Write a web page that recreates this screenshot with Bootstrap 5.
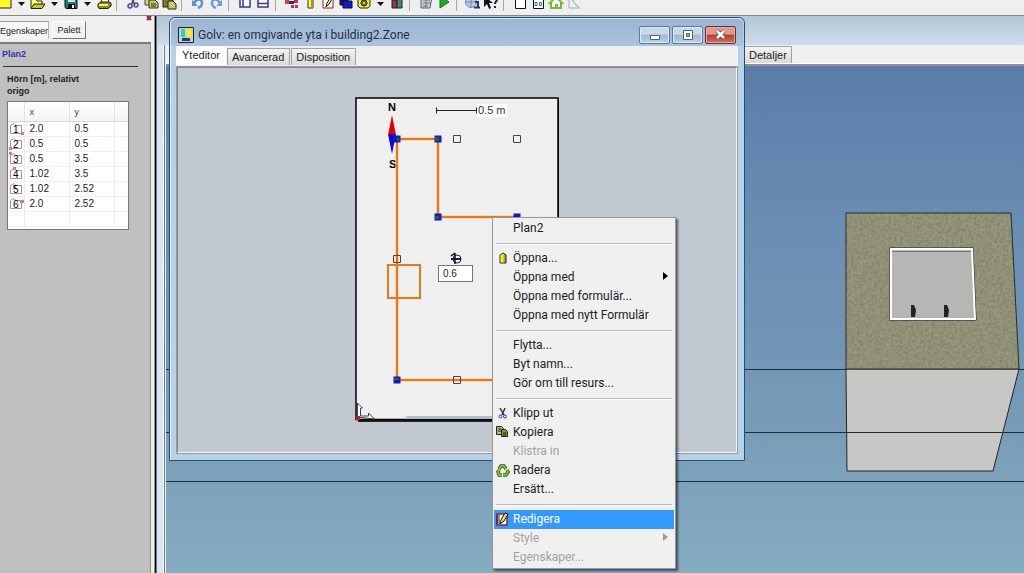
<!DOCTYPE html>
<html lang="sv">
<head>
<meta charset="utf-8">
<meta name="viewport" content="width=device-width, initial-scale=1">
<title>Golv: en omgivande yta i building2.Zone</title>
<link href="https://cdn.jsdelivr.net/npm/bootstrap@5.3.0/dist/css/bootstrap.min.css" rel="stylesheet">
<script src="https://cdn.jsdelivr.net/npm/bootstrap@5.3.0/dist/js/bootstrap.bundle.min.js"></script>
<style>
  body { font-family: "Liberation Sans", Arial, sans-serif; font-size: 11px; line-height: 14px; color: #1c1c1c; background: #efefef; }
  button { border: 0; padding: 0; background: none; color: inherit; }
  svg { display: block; flex: none; }

  /* Toolbar */
  .toolstrip { height: 16px; padding-bottom: 4px; border-bottom: 1px solid #858585; background: #efefef; }
  .toolstrip .tools { margin-left: -4px; }
  .tool { width: 18px; height: 16px; padding: 0 1px; }
  .tool-drop { width: 15px; height: 16px; padding: 0 4px; }
  .rule-v { width: 1px; height: 18px; margin: 0 7px 0 3px; background: #a8a8a8; }

  /* Property panel */
  .side { width: 155px; background: #efefef; border-right: 1px solid #8c8c8c; }
  .side-tabs { height: 26px; padding: 5px 0 0; font-size: 9px; }
  .side-tab { height: 18px; line-height: 16px; }
  .side-tab.current { width: 49px; margin-right: 3px; text-align: left; background: #f7f7f7; border-top: 1px solid #9a9a9a; border-right: 1px solid #b8b8b8; }
  .side-tab.raised { width: 34px; background: #f3f3f3; border: 1px solid #fff; border-right-color: #777; border-bottom-color: #777; }
  .side-close { width: 7px; height: 7px; top: -1px; right: 1px; }
  .side-body { width: 151px; background: #c0c0c0; border-top: 2px solid #7b7b7b; border-right: 1px solid #8d8d8d; }
  .side-name { padding: 3px 0 0 2px; margin: 0 12px 6px 0; font-size: 9px; font-weight: 700; color: #3030b4; }
  .side-name::after { content: ""; display: block; margin: 5px 0 0 1px; border-top: 1px solid #333; }
  .side-head { margin: 0 60px 4px 7px; font-size: 9px; line-height: 12px; font-weight: 700; }
  .corner-box { margin: 0 21px 0 7px; height: 129px; background: #fff; border: 1px solid #777; }
  .corner-list { width: 100%; table-layout: fixed; border-collapse: collapse; font-size: 10px; line-height: 14px; }
  .corner-list th { height: 19px; padding: 2px 0 0 5px; font-size: 9px; font-weight: 400; color: #444; background: linear-gradient(#fff, #f3f4f6); border-right: 1px solid #e2e2e2; border-bottom: 1px solid #d8d8d8; }
  .corner-list td { height: 15px; padding: 0 0 0 5px; border-right: 1px solid #ececec; border-bottom: 1px solid #f0f0f0; }
  .corner-list td:first-child { padding: 0 0 0 1px; }
  .corner-list th:last-child, .corner-list td:last-child { border-right: 0; }
  .corner-list svg text { font-size: 10px; }

  /* 3D window in the background */
  .desk { background: linear-gradient(90deg, #050505 0 1px, #d8e5f2 2px 8px, #fff 8px 9px, #6c7b88 9px 10px, #efefef 10px); padding-left: 11px; }
  .back-title { height: 29px; margin-left: -9px; background: linear-gradient(#b4c6d5, #ccdcea); }
  .back-tabs { height: 21px; padding: 1px 0 0 578px; background: #efefef; border-bottom: 2px solid #929292; box-shadow: inset 0 -1px #fff; }
  .tab-btn { height: 17px; line-height: 15px; padding: 0 4px 0 3px; background: linear-gradient(#f4f4f4, #d9d9d9); border: 1px solid #a0a0a0; border-bottom: 0; white-space: nowrap; }
  .back-tabs .tab-btn { padding-left: 4px; }
  .scene { background: linear-gradient(#5a7ca9, #6a8cb3 30%, #7599b6 65%, #86acbf); min-height: 0; }

  /* Zone surface window */
  .win { left: 14px; top: 1px; width: 576px; background: #b5d2ea; border: 1px solid #24506d; border-radius: 6px 6px 0 0; box-shadow: inset 1px 1px #e4f0fa; padding: 0 6px 6px; }
  .win-title { height: 28px; margin: 0 -5px; padding: 4px 7px 0 7px; background: linear-gradient(#9bb4cf, #aac4df); border-radius: 5px 5px 0 0; font: 12px/18px Roboto, "Open Sans", sans-serif; color: #23303f; border-top: 1px solid #d9e6f2; }
  .cap-btn { width: 31px; height: 18px; margin-right: 2px; border: 1px solid #5d7994; border-radius: 2px; background: linear-gradient(#c7d9eb 0 45%, #9fb9d3 50%, #b9d2e8); box-shadow: inset 0 0 0 1px #dce9f5; }
  .cap-btn.shut { border-color: #6d2c2c; background: linear-gradient(#dc9a90 0 45%, #bd3a2c 50%, #d0715f); box-shadow: inset 0 0 0 1px #e2aaa2; margin-right: 0; }
  .win-tabs { height: 20px; gap: 1px; background: #efefef; }
  .win-tabs .tab-btn { align-self: end; margin-bottom: 1px; padding: 0 5px 0 4px; }
  .win-tabs .tab-btn.current { align-self: start; height: 19px; padding: 0 6px; background: #fff; border: 0; }
  .win-client { background: #c0c8d0; border: 2px solid #85898e; border-right-color: #f7f7f7; border-bottom-color: #f7f7f7; outline: 1px solid #9a93a0; outline-offset: -1px; }
  .win-client svg text { font-size: 11px; }
  .height-box { left: 260px; top: 197px; width: 35px; height: 17px; padding: 0 4px; border: 1px solid #777; background: #fff; font-size: 10px; line-height: 14px; color: #222; }

  /* Context menu */
  .ctx { left: 337px; top: 201px; width: 184px; padding: 1px; background: #f0f0f0; border: 1px solid #979797; box-shadow: 2px 2px 2px #0008; font: 12px/19px Roboto, "Open Sans", sans-serif; }
  .ctx-item { height: 19px; width: 180px; text-align: left; }
  .ctx-item .ico { width: 19px; height: 16px; flex: none; padding-left: 2px; }
  .ctx-item.chosen { background: #3399ff; color: #fff; }
  .ctx-item:disabled { color: #a2a2a2; }
  .ctx-rule { height: 2px; margin: 5px 2px 4px; border-top: 1px solid #b8b8b8; border-bottom: 1px solid #fff; }
</style>
</head>
<body class="vh-100 d-flex flex-column overflow-hidden">

<header class="toolstrip flex-shrink-0 overflow-hidden d-flex align-items-end">
  <div class="tools d-flex align-items-end">
    <button class="tool" aria-label="Ny"><svg width="16" height="16"><path d="M2 1h8l4 4v8H2z" fill="#ffff20" stroke="#222"/></svg></button>
    <button class="tool-drop" aria-label="Nytt, fler val"><svg width="7" height="16"><path d="M0 7h7l-3.500 4z" fill="#111"/></svg></button>
    <button class="tool" aria-label="Öppna"><svg width="16" height="16"><path d="M1 13V4h5l1 2h5v3" fill="#ffff70" stroke="#222"/><path d="M1 13.500 4 9h11l-3 4.500z" fill="#c8c81c" stroke="#222"/></svg></button>
    <button class="tool-drop" aria-label="Öppna, fler val"><svg width="7" height="16"><path d="M0 7h7l-3.500 4z" fill="#111"/></svg></button>
    <button class="tool" aria-label="Spara"><svg width="16" height="16"><path d="M2 1h12v12.500H3L2 12z" fill="#158080" stroke="#111"/><path d="M5 1h7v6H5z" fill="#ddd"/><path d="M5 9h7v4H5z" fill="#111"/><path d="M9 10h2v3H9z" fill="#fff"/></svg></button>
    <button class="tool-drop" aria-label="Spara, fler val"><svg width="7" height="16"><path d="M0 7h7l-3.500 4z" fill="#111"/></svg></button>
    <button class="tool" aria-label="Skriv ut"><svg width="16" height="16"><path d="M5 7 7 2h7l-2 5" fill="#fff" stroke="#222"/><path d="M2 9l3-2h8l2 1v3l-3 2.500H3L2 12z" fill="#8b8b25" stroke="#222"/><path d="M3 10h9" stroke="#fff34a" stroke-width="2"/></svg></button>
    <span class="rule-v"></span>
    <button class="tool" aria-label="Klipp ut"><svg width="16" height="16" fill="none"><path d="M5 0l5 10M11 0 6 10" stroke="#444" stroke-width="1.500"/><circle cx="5" cy="11" r="2" stroke="#4545b8" stroke-width="1.500"/><circle cx="11" cy="10" r="2" stroke="#4545b8" stroke-width="1.500"/></svg></button>
    <button class="tool" aria-label="Kopiera"><svg width="16" height="16"><path d="M2 2h7v8H2z" fill="#d5d28c" stroke="#444"/><path d="M6 5h6l3 3v5H6z" fill="#c8c850" stroke="#333"/><path d="M8 9h5M8 11h5" stroke="#333"/></svg></button>
    <button class="tool" aria-label="Klistra in"><svg width="16" height="16"><path d="M2 1h10v11H2z" fill="#807b28" stroke="#222"/><path d="M7 6h5l3 3v5H7z" fill="#ccc968" stroke="#222"/></svg></button>
    <span class="rule-v"></span>
    <button class="tool" aria-label="Ångra"><svg width="16" height="16" fill="none"><path d="M4 8c3-5 8-4 8 0 0 2-1 4-4 5" stroke="#5b92cf" stroke-width="2.500"/><path d="M2 5v6h6z" fill="#5b92cf"/></svg></button>
    <button class="tool" aria-label="Gör om"><svg width="16" height="16" fill="none"><path d="M12 8c-3-5-8-4-8 0 0 2 1 4 4 5" stroke="#6d9fd5" stroke-width="2.500"/><path d="M14 5v6H8z" fill="#6d9fd5"/></svg></button>
    <span class="rule-v"></span>
    <button class="tool" aria-label="Sidopanel"><svg width="16" height="16"><path d="M3 1h10v11H3zM6 1v11" fill="#fff" stroke="#3434a4" stroke-width="1.500"/></svg></button>
    <button class="tool" aria-label="Bottenpanel"><svg width="16" height="16"><path d="M3 1h10v11H3zM3 8.500h10" fill="#fff" stroke="#3434a4" stroke-width="1.500"/></svg></button>
    <span class="rule-v"></span>
    <button class="tool" aria-label="Koppla"><svg width="16" height="16"><path d="M1 5h4v4H1z" fill="#d04040"/><path d="M5 6h5v3H5z" fill="#3b2878"/><path d="M7 10h3v3H7zM11 10h3v3h-3zM10 5h4v3h-4z" fill="#b9304c"/></svg></button>
    <button class="tool" aria-label="Dörr"><svg width="16" height="16"><path d="M6 1h5v12H6z" fill="#ffff20" stroke="#333"/><path d="M9 1h2v12H9z" fill="#99962d"/></svg></button>
    <button class="tool" aria-label="Redigera yta"><svg width="16" height="16"><path d="M3 1h10v12H3z" fill="#fff" stroke="#882222"/><path d="M6 12l1-4 5-8 2 1-5 8z" fill="#ffe867" stroke="#222"/></svg></button>
    <button class="tool" aria-label="Fönster"><svg width="16" height="16"><path d="M2 2h8v8H2z" fill="#10108c" stroke="#111"/><path d="M5 6h9v7H5z" fill="#1518d0" stroke="#112"/></svg></button>
    <button class="tool" aria-label="Inställningar"><svg width="16" height="16"><path d="M4 1h8l2 2v8l-2 2H4l-2-2V3z" fill="#f5ed27" stroke="#222"/><circle cx="8" cy="8" r="3" fill="#79741d" stroke="#222"/><circle cx="8" cy="8" r="1" fill="#f5ed27"/></svg></button>
    <button class="tool-drop" aria-label="Inställningar, fler val"><svg width="7" height="16"><path d="M0 7h7l-3.500 4z" fill="#111"/></svg></button>
    <button class="tool" aria-label="Block"><svg width="16" height="16"><path d="M3 5h5v8H3z" fill="#973163" stroke="#222"/><path d="M8 2h5v11H8z" fill="#458c57" stroke="#222"/></svg></button>
    <span class="rule-v"></span>
    <button class="tool" aria-label="Beräkna"><svg width="16" height="16"><path d="M3 2h11l-2 11H3z" fill="#cad2d5" stroke="#526066"/><path d="M5 5h7M5 8h7M5 11h5M8 4v8" stroke="#65777e"/></svg></button>
    <button class="tool" aria-label="Kör"><svg width="16" height="16"><path d="M4 1v12l9-6z" fill="#22aa27" stroke="#11751a"/></svg></button>
    <span class="rule-v"></span>
    <button class="tool" aria-label="Information"><svg width="16" height="16"><circle cx="6" cy="7" r="5.500" fill="#b7cce0" stroke="#738eb0"/><path d="M1 7h10M6 1v12" stroke="#738eb0"/><path d="M10 7h3v5M9 12.500h6M11 4h3" stroke="#1d3768" stroke-width="2" fill="none"/></svg></button>
    <button class="tool" aria-label="Hjälp"><svg width="16" height="16"><path d="M1 1v11l3-3 2 5 2-1-2-5h4z" fill="#111"/><path d="M9 4c1-3 6-2 5 1-1 2-2 2-2 4M12 11v2" stroke="#223" stroke-width="2" fill="none"/></svg></button>
    <span class="rule-v"></span>
    <button class="tool" aria-label="Ritning"><svg width="16" height="16"><path d="M3.500 4h10v9.500h-10z" fill="#fff" stroke="#111"/><path d="M2 4.500h13" stroke="#933"/></svg></button>
    <button class="tool" aria-label="Fasad"><svg width="16" height="16"><path d="M3.500 3h10v10.500h-10z" fill="#fff" stroke="#111"/><path d="M5 7.500h2v3H5zM9.500 7.500h2v3h-2z" fill="#fff" stroke="#238080"/></svg></button>
    <button class="tool" aria-label="Hus"><svg width="16" height="16"><path d="M2 8l6-6 6 6h-1v5H3V8z" fill="#fff" stroke="#72bd30" stroke-width="2"/><path d="M7 9h3v3H7z" fill="#80bd40"/></svg></button>
    <button class="tool" aria-label="Diagram"><svg width="16" height="16"><path d="M3 1v12h11" fill="none" stroke="#aaa"/><path d="M4 4c4 0 4 6 9 8" fill="none" stroke="#69abc2"/></svg></button>
  </div>
</header>

<div class="d-flex flex-grow-1 overflow-hidden">
  <aside class="side flex-shrink-0 d-flex flex-column">
    <div class="side-tabs position-relative d-flex flex-shrink-0">
      <button class="side-tab current">Egenskaper</button>
      <button class="side-tab raised">Palett</button>
      <button class="side-close position-absolute" aria-label="Stäng"><svg width="7" height="7"><path d="M1 1l4 4M5 1 1 5" stroke="#9a1c28" stroke-width="2"/></svg></button>
    </div>
    <section class="side-body flex-grow-1">
      <div class="side-name">Plan2</div>
      <div class="side-head">Hörn [m], relativt origo</div>
      <div class="corner-box">
        <table class="corner-list">
          <colgroup><col style="width:16px"><col style="width:45px"><col style="width:45px"><col></colgroup>
          <thead><tr><th></th><th>x</th><th>y</th><th></th></tr></thead>
          <tbody>
            <tr><td><svg width="16" height="14"><path d="M1.500 3.500 5 1.500l2 2h5.500v8h-11z" fill="#fff" stroke="#999"/><text x="4" y="11">1</text><path d="M12 10h3v3h-3z" fill="#e57880"/></svg></td><td>2.0</td><td>0.5</td><td></td></tr>
            <tr><td><svg width="16" height="14"><path d="M1.500 3.500 5 1.500l2 2h5.500v8h-11z" fill="#fff" stroke="#999"/><text x="4" y="11">2</text><path d="M0 10h3v3H0z" fill="#e57880"/></svg></td><td>0.5</td><td>0.5</td><td></td></tr>
            <tr><td><svg width="16" height="14"><path d="M1.500 3.500 5 1.500l2 2h5.500v8h-11z" fill="#fff" stroke="#999"/><text x="4" y="11">3</text><path d="M0 0h3v3H0z" fill="#e57880"/></svg></td><td>0.5</td><td>3.5</td><td></td></tr>
            <tr><td><svg width="16" height="14"><path d="M1.500 3.500 5 1.500l2 2h5.500v8h-11z" fill="#fff" stroke="#999"/><text x="4" y="11">4</text><path d="M4 0h3v3H4z" fill="#e57880"/></svg></td><td>1.02</td><td>3.5</td><td></td></tr>
            <tr><td><svg width="16" height="14"><path d="M1.500 3.500 5 1.500l2 2h5.500v8h-11z" fill="#fff" stroke="#999"/><path d="M4 3h3v3H4z" fill="#e57880"/><text x="4" y="11">5</text></svg></td><td>1.02</td><td>2.52</td><td></td></tr>
            <tr><td><svg width="16" height="14"><path d="M1.500 3.500 5 1.500l2 2h5.500v8h-11z" fill="#fff" stroke="#999"/><text x="4" y="11">6</text><path d="M11 3h4v3h-4z" fill="#e57880"/></svg></td><td>2.0</td><td>2.52</td><td></td></tr>
            <tr><td></td><td></td><td></td><td></td></tr>
          </tbody>
        </table>
      </div>
    </section>
  </aside>

  <main class="desk position-relative flex-grow-1 d-flex flex-column overflow-hidden">
    <div class="back-title flex-shrink-0"></div>
    <div class="back-tabs flex-shrink-0 d-flex align-items-start"><button class="tab-btn">Detaljer</button></div>
    <div class="scene flex-grow-1 overflow-hidden">
      <svg width="100%" height="520" role="img" aria-label="3D-vy av byggnaden">
        <defs>
          <filter id="grit" x="0" y="0" width="100%" height="100%" color-interpolation-filters="sRGB">
            <feTurbulence type="fractalNoise" baseFrequency=".35" numOctaves="2" seed="4"/>
            <feColorMatrix values="0 0 0 0 .42  0 0 0 0 .42  0 0 0 0 .34  0 0 0 1 -.35"/>
            <feComposite operator="in" in2="SourceGraphic" result="n"/>
            <feMerge><feMergeNode in="SourceGraphic"/><feMergeNode in="n"/></feMerge>
          </filter>
        </defs>
        <path d="M0 303.500h2000M0 366.500h2000M0 415.500h2000" stroke="#183040"/>
        <path d="M680 303h173l-26 102H681z" fill="#c7c7c6" stroke="#222"/>
        <path d="M680 147h165l8 156H680z" fill="#96977c" filter="url(#grit)"/>
        <path d="M680 147h165l8 156H680zM681 366.500h157" fill="none" stroke="#252f25"/>
        <path d="M725 183h81l3 70h-84z" fill="#b6b6b5" stroke="#222" stroke-width="3"/>
        <path d="M725 183h81l3 70h-84z" fill="#b6b6b5" stroke="#fff" stroke-width="2"/>
        <path d="M726 185.500h79" stroke="#777"/>
        <path d="M745 239h3l2 5-1 7h-4zM778 239h3l2 5-1 7h-4z" fill="#222"/>
      </svg>
    </div>

    <section class="win position-absolute">
      <div class="win-title d-flex align-items-center">
        <svg class="me-1" width="16" height="16"><path d="M.500.500h15v15H.500z" fill="#c7d3c5" stroke="#222"/><path d="M3 2h4v8H3z" fill="#19d2e2"/><path d="M8 2h5v8H8z" fill="#ffef17"/><path d="M4 11h8v3H4z" fill="#243591"/></svg>
        <span class="flex-grow-1">Golv: en omgivande yta i building2.Zone</span>
        <button class="cap-btn d-flex align-items-center justify-content-center" aria-label="Minimera"><svg width="12" height="14"><path d="M1.500 7.500h9v4h-9z" fill="#fff" stroke="#566"/></svg></button>
        <button class="cap-btn d-flex align-items-center justify-content-center" aria-label="Maximera"><svg width="12" height="12"><path d="M1.500 1.500h9v9h-9z" fill="#fff" stroke="#566"/><path d="M4.500 4.500h3v3h-3z" fill="#9ab" stroke="#566"/></svg></button>
        <button class="cap-btn shut d-flex align-items-center justify-content-center" aria-label="Stäng fönster"><svg width="12" height="12"><path d="M2 2l7 7M9 2 2 9" stroke="#544" stroke-width="4"/><path d="M2 2l7 7M9 2 2 9" stroke="#fff" stroke-width="2.500"/></svg></button>
      </div>
      <div class="win-tabs d-flex">
        <button class="tab-btn current">Yteditor</button>
        <button class="tab-btn">Avancerad</button>
        <button class="tab-btn">Disposition</button>
      </div>
      <div class="win-client position-relative">
        <svg width="100%" height="384" viewBox="178 68 558 384" preserveAspectRatio="xMinYMin" role="img" aria-label="Plan över golvet">
          <path d="M358 100h201v322H358z" fill="#222"/>
          <path d="M356 98h202v321.500H356z" fill="#efefef" stroke="#000" stroke-width="1.500"/>
          <path d="M404 419l3-3h151v3z" fill="#a4c3da"/>
          <path d="M477 104h30v13h-30z" fill="#fff"/>
          <path d="M436.500 110.500h40M436.500 107.500v6M476.500 107.500v6" stroke="#222" fill="none"/>
          <text x="478" y="114" fill="#333">0.5 m</text>
          <text x="388" y="111" font-weight="700">N</text>
          <text x="389" y="168" font-weight="700">S</text>
          <path d="M392 115l4 20h-8z" fill="#e80000"/><path d="M388 134h8l-4 20z" fill="#0a0ae0"/>
          <path d="M397 139h41v78h79v163H397z" fill="none" stroke="#f8c080" stroke-width="3"/>
          <path d="M397 139h41v78h79v163H397zM388 265h32v33h-32z" fill="none" stroke="#e87818" stroke-width="2"/>
          <path d="M393.500 135.500h7v7h-7zM434.500 135.500h7v7h-7zM434.500 213.500h7v7h-7zM513.500 213.500h7v7h-7zM393.500 376.500h7v7h-7z" fill="#1418ca"/>
          <path d="M397 137l3 2-3 3zM435 137h4v4h-4zM435 216h4v3h-4zM394 378h5v2h-5z" fill="#176a35"/>
          <path d="M453.500 135.500h7v7h-7zM513.500 135.500h7v7h-7zM393.500 255.500h7v7h-7zM453.500 376.500h7v7h-7z" fill="none" stroke="#444"/>
          <circle cx="457" cy="259" r="4" fill="#fff" stroke="#222"/><path d="M451 259h10" stroke="#111480" stroke-width="2"/><path d="M455 253v11M451 256l4-3" stroke="#111" stroke-width="1.500"/>
          <path d="M357.500 417v-14l5 5h-2v8h8v-3l6 6z" fill="#fff" stroke="#444"/>
          <path d="M356 416h4v4h-4z" fill="#c01c20"/>
        </svg>
        <input class="height-box position-absolute" type="text" value="0.6" aria-label="Höjd">
      </div>
    </section>

    <div class="ctx position-absolute" role="menu">
      <button class="ctx-item d-flex align-items-center" role="menuitem"><span class="ico"></span>Plan2</button>
      <div class="ctx-rule"></div>
      <button class="ctx-item d-flex align-items-center" role="menuitem"><span class="ico"><svg width="14" height="14"><path d="M4 4l3-2 3 2v8H4z" fill="#a8a818" stroke="#222"/><path d="M4.500 4l3-1.500v9h-3z" fill="#f0f020"/></svg></span>Öppna...</button>
      <button class="ctx-item d-flex align-items-center" role="menuitem"><span class="ico"></span><span class="flex-grow-1">Öppna med</span><svg class="me-1" width="7" height="12"><path d="M0 0v8l5-4z" fill="#000"/></svg></button>
      <button class="ctx-item d-flex align-items-center" role="menuitem"><span class="ico"></span>Öppna med formulär...</button>
      <button class="ctx-item d-flex align-items-center" role="menuitem"><span class="ico"></span>Öppna med nytt Formulär</button>
      <div class="ctx-rule"></div>
      <button class="ctx-item d-flex align-items-center" role="menuitem"><span class="ico"></span>Flytta...</button>
      <button class="ctx-item d-flex align-items-center" role="menuitem"><span class="ico"></span>Byt namn...</button>
      <button class="ctx-item d-flex align-items-center" role="menuitem"><span class="ico"></span>Gör om till resurs...</button>
      <div class="ctx-rule"></div>
      <button class="ctx-item d-flex align-items-center" role="menuitem"><span class="ico"><svg width="14" height="14" fill="none"><path d="M4 2l4 7M9 2 6 9" stroke="#333" stroke-width="1.500"/><circle cx="4.500" cy="10.500" r="1.500" stroke="#3434b0"/><circle cx="9" cy="10.500" r="1.500" stroke="#3434b0"/></svg></span>Klipp ut</button>
      <button class="ctx-item d-flex align-items-center" role="menuitem"><span class="ico"><svg width="14" height="14"><path d="M.500 1.500h5l2 2v6h-7z" fill="#bcbd78" stroke="#222"/><path d="M5.500 4.500h4l2 2v5h-6z" fill="#779a28" stroke="#222"/><path d="M2 4h3M2 6h3M7 8h3M7 10h3" stroke="#222"/></svg></span>Kopiera</button>
      <button class="ctx-item d-flex align-items-center" role="menuitem" disabled><span class="ico"></span>Klistra in</button>
      <button class="ctx-item d-flex align-items-center" role="menuitem"><span class="ico"><svg width="14" height="14" fill="none"><path d="M3 6l2-3h3l2 3M11 7l1 2-2 3H7M6 12H3L2 9l1-2" stroke="#355a12" stroke-width="3.500"/><path d="M3 6l2-3h3l2 3M11 7l1 2-2 3H7M6 12H3L2 9l1-2" stroke="#82b63a" stroke-width="2"/></svg></span>Radera</button>
      <button class="ctx-item d-flex align-items-center" role="menuitem"><span class="ico"></span>Ersätt...</button>
      <div class="ctx-rule"></div>
      <button class="ctx-item chosen d-flex align-items-center" role="menuitem"><span class="ico"><svg width="14" height="14"><path d="M1 2h10v11H1z" fill="#fff" stroke="#a22020" stroke-width="1.500"/><path d="M1 3v9M3 3v9" stroke="#222"/><path d="M4 12l1-4 4-7 3 1-4 7z" fill="#f3e55b" stroke="#111"/></svg></span>Redigera</button>
      <button class="ctx-item d-flex align-items-center" role="menuitem" disabled><span class="ico"></span><span class="flex-grow-1">Style</span><svg class="me-1" width="7" height="12"><path d="M0 0v8l5-4z" fill="#999"/></svg></button>
      <button class="ctx-item d-flex align-items-center" role="menuitem" disabled><span class="ico"></span>Egenskaper...</button>
    </div>
  </main>
</div>
</body>
</html>
